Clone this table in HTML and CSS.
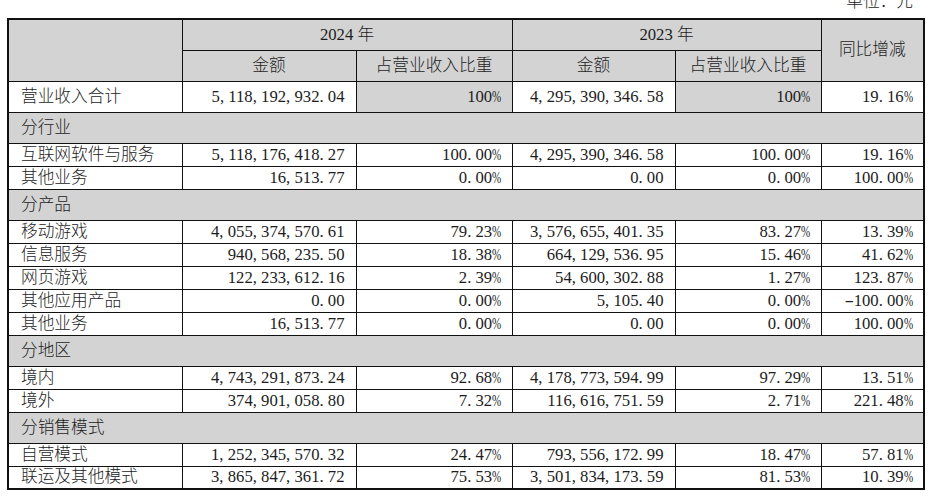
FILE: index.html
```html
<!DOCTYPE html>
<html lang="zh-CN">
<head>
<meta charset="utf-8">
<title>营业收入构成</title>
<link rel="stylesheet" href="styles.css">
</head>
<body>
<div class="page">
  <div class="unit">单位：元</div>
  <table class="report">
    <colgroup>
      <col class="c1"><col class="c2"><col class="c3"><col class="c4"><col class="c5"><col class="c6">
    </colgroup>
    <tr class="hrow">
      <td class="g" rowspan="2"></td>
      <td class="g ctr" colspan="2">2024 年</td>
      <td class="g ctr" colspan="2">2023 年</td>
      <td class="g ctr" rowspan="2">同比增减</td>
    </tr>
    <tr class="hrow">
      <td class="g ctr">金额</td>
      <td class="g ctr">占营业收入比重</td>
      <td class="g ctr">金额</td>
      <td class="g ctr">占营业收入比重</td>
    </tr>
    <tr class="trow">
      <td class="lbl">营业收入合计</td>
      <td class="n">5<i>,</i>118<i>,</i>192<i>,</i>932<i>.</i>04</td>
      <td class="n g">100<i class="pc">%</i></td>
      <td class="n">4<i>,</i>295<i>,</i>390<i>,</i>346<i>.</i>58</td>
      <td class="n g">100<i class="pc">%</i></td>
      <td class="n">19<i>.</i>16<i class="pc">%</i></td>
    </tr>
    <tr class="sec"><td class="g lbl" colspan="6">分行业</td></tr>
    <tr class="row">
      <td class="lbl">互联网软件与服务</td>
      <td class="n">5<i>,</i>118<i>,</i>176<i>,</i>418<i>.</i>27</td>
      <td class="n">100<i>.</i>00<i class="pc">%</i></td>
      <td class="n">4<i>,</i>295<i>,</i>390<i>,</i>346<i>.</i>58</td>
      <td class="n">100<i>.</i>00<i class="pc">%</i></td>
      <td class="n">19<i>.</i>16<i class="pc">%</i></td>
    </tr>
    <tr class="row">
      <td class="lbl">其他业务</td>
      <td class="n">16<i>,</i>513<i>.</i>77</td>
      <td class="n">0<i>.</i>00<i class="pc">%</i></td>
      <td class="n">0<i>.</i>00</td>
      <td class="n">0<i>.</i>00<i class="pc">%</i></td>
      <td class="n">100<i>.</i>00<i class="pc">%</i></td>
    </tr>
    <tr class="sec"><td class="g lbl" colspan="6">分产品</td></tr>
    <tr class="row">
      <td class="lbl">移动游戏</td>
      <td class="n">4<i>,</i>055<i>,</i>374<i>,</i>570<i>.</i>61</td>
      <td class="n">79<i>.</i>23<i class="pc">%</i></td>
      <td class="n">3<i>,</i>576<i>,</i>655<i>,</i>401<i>.</i>35</td>
      <td class="n">83<i>.</i>27<i class="pc">%</i></td>
      <td class="n">13<i>.</i>39<i class="pc">%</i></td>
    </tr>
    <tr class="row">
      <td class="lbl">信息服务</td>
      <td class="n">940<i>,</i>568<i>,</i>235<i>.</i>50</td>
      <td class="n">18<i>.</i>38<i class="pc">%</i></td>
      <td class="n">664<i>,</i>129<i>,</i>536<i>.</i>95</td>
      <td class="n">15<i>.</i>46<i class="pc">%</i></td>
      <td class="n">41<i>.</i>62<i class="pc">%</i></td>
    </tr>
    <tr class="row">
      <td class="lbl">网页游戏</td>
      <td class="n">122<i>,</i>233<i>,</i>612<i>.</i>16</td>
      <td class="n">2<i>.</i>39<i class="pc">%</i></td>
      <td class="n">54<i>,</i>600<i>,</i>302<i>.</i>88</td>
      <td class="n">1<i>.</i>27<i class="pc">%</i></td>
      <td class="n">123<i>.</i>87<i class="pc">%</i></td>
    </tr>
    <tr class="row">
      <td class="lbl">其他应用产品</td>
      <td class="n">0<i>.</i>00</td>
      <td class="n">0<i>.</i>00<i class="pc">%</i></td>
      <td class="n">5<i>,</i>105<i>.</i>40</td>
      <td class="n">0<i>.</i>00<i class="pc">%</i></td>
      <td class="n"><i class="mn">-</i>100<i>.</i>00<i class="pc">%</i></td>
    </tr>
    <tr class="row">
      <td class="lbl">其他业务</td>
      <td class="n">16<i>,</i>513<i>.</i>77</td>
      <td class="n">0<i>.</i>00<i class="pc">%</i></td>
      <td class="n">0<i>.</i>00</td>
      <td class="n">0<i>.</i>00<i class="pc">%</i></td>
      <td class="n">100<i>.</i>00<i class="pc">%</i></td>
    </tr>
    <tr class="sec"><td class="g lbl" colspan="6">分地区</td></tr>
    <tr class="row">
      <td class="lbl">境内</td>
      <td class="n">4<i>,</i>743<i>,</i>291<i>,</i>873<i>.</i>24</td>
      <td class="n">92<i>.</i>68<i class="pc">%</i></td>
      <td class="n">4<i>,</i>178<i>,</i>773<i>,</i>594<i>.</i>99</td>
      <td class="n">97<i>.</i>29<i class="pc">%</i></td>
      <td class="n">13<i>.</i>51<i class="pc">%</i></td>
    </tr>
    <tr class="row">
      <td class="lbl">境外</td>
      <td class="n">374<i>,</i>901<i>,</i>058<i>.</i>80</td>
      <td class="n">7<i>.</i>32<i class="pc">%</i></td>
      <td class="n">116<i>,</i>616<i>,</i>751<i>.</i>59</td>
      <td class="n">2<i>.</i>71<i class="pc">%</i></td>
      <td class="n">221<i>.</i>48<i class="pc">%</i></td>
    </tr>
    <tr class="sec"><td class="g lbl" colspan="6">分销售模式</td></tr>
    <tr class="row">
      <td class="lbl">自营模式</td>
      <td class="n">1<i>,</i>252<i>,</i>345<i>,</i>570<i>.</i>32</td>
      <td class="n">24<i>.</i>47<i class="pc">%</i></td>
      <td class="n">793<i>,</i>556<i>,</i>172<i>.</i>99</td>
      <td class="n">18<i>.</i>47<i class="pc">%</i></td>
      <td class="n">57<i>.</i>81<i class="pc">%</i></td>
    </tr>
    <tr class="row">
      <td class="lbl">联运及其他模式</td>
      <td class="n">3<i>,</i>865<i>,</i>847<i>,</i>361<i>.</i>72</td>
      <td class="n">75<i>.</i>53<i class="pc">%</i></td>
      <td class="n">3<i>,</i>501<i>,</i>834<i>,</i>173<i>.</i>59</td>
      <td class="n">81<i>.</i>53<i class="pc">%</i></td>
      <td class="n">10<i>.</i>39<i class="pc">%</i></td>
    </tr>
  </table>
</div>
</body>
</html>
```
FILE: styles.css
```css
html, body {
  margin: 0;
  padding: 0;
  background: #ffffff;
}
.page {
  padding-left: 7px;
  width: 916px;
  font-family: "Liberation Serif", "Noto Sans CJK SC", serif;
  font-size: 16.7px;
  color: #1c1c1c;
}
.unit {
  text-align: right;
  padding-right: 10px;
  line-height: 18px;
  margin-top: -7px;
  margin-bottom: 7px;
  font-weight: 300;
}
.report {
  border-collapse: collapse;
  table-layout: fixed;
  width: 916px;
  border: 2px solid #111;
  font-weight: 300;
}
.c1 { width: 174px; }
.c2 { width: 174px; }
.c3 { width: 156px; }
.c4 { width: 163px; }
.c5 { width: 146px; }
.c6 { width: 103px; }
.report td {
  border: 1px solid #111;
  padding: 0;
  line-height: 20px;
  vertical-align: middle;
  white-space: nowrap;
}
.hrow { height: 31px; }
.trow { height: 31px; }
.sec { height: 31px; }
.row { height: 23px; }
.g { background: #d3d3d3; }
.ctr { text-align: center; }
.lbl { padding-left: 12px !important; text-align: left; }
.n { text-align: right; padding-right: 11px !important; }
.n i {
  display: inline-block;
  width: 0.5em;
  font-style: normal;
  text-align: left;
}
.n i.pc {
  transform: scaleX(0.66);
  transform-origin: left center;
}
.n i.mn {
  text-align: center;
  transform: scaleX(1.7);
}
```
